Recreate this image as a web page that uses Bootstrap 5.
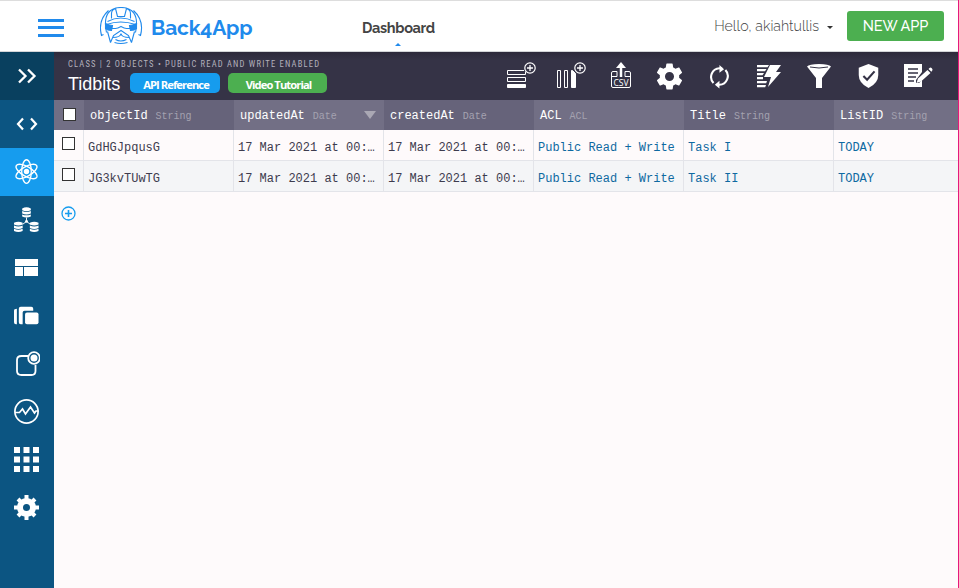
<!DOCTYPE html>
<html lang="en">
<head>
<meta charset="utf-8">
<meta name="viewport" content="width=device-width, initial-scale=1">
<title>Back4App Dashboard</title>
<link href="https://cdn.jsdelivr.net/npm/bootstrap@5.3.0/dist/css/bootstrap.min.css" rel="stylesheet">
<style>
body{height:588px;overflow:hidden;background:#fefafb;font-family:"Liberation Sans",sans-serif}
.app-shell{height:588px;border-right:1px solid #e6197b}
.topbar{height:52px;background:#fff;border-top:1px solid #ddd;border-bottom:1px solid #d3d5d8;font-family:Lato,sans-serif}
.burger{width:26px;height:18px;margin-left:38px;margin-top:3px}
.burger span{height:3px;background:#208aec}
.logo{margin-left:36px}
.brand{font:700 21px/30px Raleway,Lato,sans-serif;color:#208aec;margin-left:8px;width:103px;letter-spacing:-.15px;padding-top:3px}
.dash{margin-left:108px;width:74px;height:50px;padding-top:17px;font:700 14.5px/20px Raleway,Lato,sans-serif;color:#444;letter-spacing:-.32px}
.dash i{bottom:5px;left:33px;border:3px solid transparent;border-top:0;border-bottom-color:#208aec}
.hello{font:300 14.2px/20px Raleway,Lato,sans-serif;color:#444;white-space:nowrap}
.caret{border:3.5px solid transparent;border-top-color:#333;border-bottom:0;margin:2px 14px 0 8px}
.newapp{width:97px;height:30px;margin-right:14px;background:#4caf50;color:#fff;border-radius:3px;font:500 14.5px/30px Raleway,Lato,sans-serif;padding:0;border:0}
.side{width:54px;background:#0c5582}
.side>div{height:48px;color:#fff;padding-right:1px;padding-bottom:1px}
.side .first{background:#09405f}
.side .active{background:#169cee}
.toolbar{height:48px;background:linear-gradient(#2d2a3b,#353346 8px);color:#fff}
.class-info{padding-left:14px}
.meta{font:8.5px/10px "Roboto Condensed",Roboto,sans-serif;color:#b3b1bc;white-space:nowrap;padding-top:7px;letter-spacing:1.2px}
.class-name{font:18px/22px "Liberation Sans",sans-serif;width:62px;letter-spacing:0}
.pill{height:20px;border-radius:5px;color:#fff;font:700 11.2px/23px "Open Sans",sans-serif;letter-spacing:-.92px;padding-left:2px;text-align:center}
.api{width:90px;background:#169cee}.video{width:99px;background:#4caf50;margin-left:8px}
.tools{width:447px;margin-right:15px}
.tools>div{flex:1 1 0;min-width:0}
.grid{font:12px/30px "Liberation Mono",monospace;color:#3e3c4e;width:934px}
.grid-row{height:31px;border-bottom:1px solid #e3e4e9}
.grid-row>div{width:150px;border-right:1px solid #e3e4e9;padding:4px 4px 0;line-height:28px;white-space:nowrap;overflow:hidden}
.grid-row>div.check,.grid-head>div.check{width:30px;padding:7px 0 0 8px}
.grid-head>div.check{padding:8px 0 0 9px}
.grid-row.even{background:#f4f5f7}
.grid-head{height:30px;color:#fff}
.grid-head>div{width:150px;padding:3px 6px 0;line-height:27px;background:#66637a}
.grid-head>div.alt{background:#726f85}
.grid-head small{font-size:10px;color:#a4a2b0;margin-left:8px}
.box{width:13px;height:13px;background:#fff;border:1px solid #333}
.grid-row .link{color:#0e69a1}
.sort{border:6px solid transparent;border-top:8px solid #aaa8b4;border-bottom:0;margin:8px 2px 0 0}
.add{margin:14px 0 0 7px}
</style>
<script src="https://cdn.jsdelivr.net/npm/bootstrap@5.3.0/dist/js/bootstrap.bundle.min.js"></script>
</head>
<body>
<div class="app-shell d-flex flex-column overflow-hidden">
<header class="topbar d-flex align-items-center flex-shrink-0">
  <div class="burger d-flex flex-column justify-content-between"><span></span><span></span><span></span></div>
  <svg class="logo flex-shrink-0" width="43" height="38" viewBox="0.5 0.5 43 38" fill="none" stroke="#208aec" stroke-width="1.1">
    <path d="M7 26C3 7 11 1 21.500 1S40 7 36 26M12 12V7Q12 3 17 2M31 12V7q0-4-5-5M16 2l2 8h7l2-8M8 15q13-7 27 0M9 4Q-2 14 2 29l2-1M34 4q11 10 7 25l-2-1"/>
    <path d="M7 18q14-5 29 0M8 18q-1 4 3 4h5q2 0 5.500-2 3.500 2 5.500 2h5q4 0 3-4"/>
    <path d="M6 17q4 2 7 2l-1 5q-4 0-6-2zM37 17q-4 2-7 2l1 5q4 0 6-2z" fill="#208aec"/>
    <path d="M8 25l3 11M35 25l-3 11M11 36l3-7 7.500-5 7.500 5 3 7M13 31q8 0 8.500-4 .5 4 8.500 4M16 33q5 3 11 0M15 36q6 2 13 0"/>
  </svg>
  <div class="brand">Back4App</div>
  <div class="dash position-relative">Dashboard<i class="position-absolute"></i></div>
  <div class="hello ms-auto">Hello, akiahtullis</div><span class="caret"></span>
  <button class="newapp">NEW APP</button>
</header>
<div class="d-flex flex-grow-1">
  <nav class="side flex-shrink-0">
    <div class="first d-flex align-items-center justify-content-center"><svg width="20" height="16" fill="none" stroke="#fff" stroke-width="2.3"><path d="M2 1.500l6.500 6.500L2 14.500M11 1.500l6.500 6.500-6.500 6.500"/></svg></div>
    <div class="d-flex align-items-center justify-content-center"><svg width="22" height="14" fill="none" stroke="#fff" stroke-width="2.2"><path d="M7 1.500L2 7l5 5.500M15 1.500L20 7l-5 5.500"/></svg></div>
    <div class="active d-flex align-items-center justify-content-center"><svg width="25" height="25" viewBox="-12.5 -12.5 25 25" fill="none" stroke="#fff" stroke-width="1.35"><ellipse rx="4.800" ry="11.800"/><ellipse rx="4.800" ry="11.800" transform="rotate(60)"/><ellipse rx="4.800" ry="11.800" transform="rotate(120)"/><circle r="2.700" fill="#fff" stroke="none"/></svg></div>
    <div class="d-flex align-items-center justify-content-center"><svg width="25" height="25" viewBox="0 0 26 26"><defs><g id="db" fill="#fff"><path d="M0 1.500Q4.500-.8 9 1.500V3.300Q4.500 5.300 0 3.300zM0 4.200q4.500 2 9 0v2.600q-4.500 2-9 0zM0 7.700q4.500 2 9 0V10q-4.500 2-9 0z"/></g></defs><use href="#db" x="8.500"/><use href="#db" y="15"/><use href="#db" x="16.500" y="15"/><path d="M13 11v4l-4 3M13 15l4 3" stroke="#fff" fill="none"/><circle cx="13" cy="15" r="1.500" fill="#fff"/></svg></div>
    <div class="d-flex align-items-center justify-content-center"><svg width="23" height="17" fill="#fff"><path d="M0 0h23v7H0zM0 8h8v9H0zM9 8h14v9H9z"/></svg></div>
    <div class="d-flex align-items-center justify-content-center"><svg width="25" height="19" viewBox="0 0.5 26 19" fill="#fff"><path d="M3 3v16H2q-2 0-2-2V5q0-2 3-2zM5 3q0-2 2-2h11q2 0 2 2v2H11Q9 5 9 7v12H7q-2 0-2-2z"/><rect x="11.500" y="7" width="14" height="12" rx="2"/></svg></div>
    <div class="d-flex align-items-center justify-content-center"><svg width="27" height="25" viewBox="-0.5 0 27 25" fill="none" stroke="#fff" stroke-width="1.800"><path d="M15 5H8Q3.500 5 3.500 9v11q0 4 4.500 4h10q4 0 4-4V14"/><circle cx="20.500" cy="7" r="5.800"/><circle cx="20.500" cy="7" r="3.500" fill="#fff" stroke="none"/></svg></div>
    <div class="d-flex align-items-center justify-content-center"><svg width="25" height="25" viewBox="0.5 0.5 25 25" fill="none" stroke="#fff" stroke-width="1.700"><circle cx="13" cy="13" r="11.600"/><path d="M1.500 14H6l3-3.500 3 5L17 8.500l4 6 1.500-2H25"/></svg></div>
    <div class="d-flex align-items-center justify-content-center"><svg width="25" height="25" fill="#fff"><path d="M0 0h6v6H0zM9.500 0h6v6h-6zM19 0h6v6h-6zM0 9.500h6v6H0zM9.500 9.500h6v6h-6zM19 9.500h6v6h-6zM0 19h6v6H0zM9.500 19h6v6h-6zM19 19h6v6h-6z"/></svg></div>
    <div class="d-flex align-items-center justify-content-center"><svg width="25" height="25" viewBox="-12.5 -12.5 25 25" fill="none" stroke="#fff"><circle r="6.500" stroke-width="6"/><path stroke-width="4" d="M0-12.500V-8M0 8v4.500M-12.500 0H-8M8 0h4.500M-8.500-8.500l3 3M5.500 5.500l3 3M8.500-8.500l-3 3M-8.500 8.500l3-3"/></svg></div>
  </nav>
  <main class="flex-grow-1 overflow-hidden">
    <section class="toolbar d-flex justify-content-between">
      <div class="class-info">
        <div class="meta">CLASS | 2 OBJECTS • PUBLIC READ AND WRITE ENABLED</div>
        <div class="d-flex mt-1"><div class="class-name">Tidbits</div><div class="pill api">API Reference</div><div class="pill video">Video Tutorial</div></div>
      </div>
      <div class="tools d-flex flex-shrink-0 align-items-center">
        <div class="d-flex justify-content-center"><svg width="30" height="28" fill="none" stroke="#fff"><path d="M18 8.500H1.500v4h18v-3M1.500 15.500h18v4h-18z"/><path fill="#fff" d="M1.500 22.500h18v3h-18z"/><circle cx="24" cy="6" r="5.200" stroke-width="1.200"/><path d="M21 6h6M24 3v6" stroke-width="1.300"/></svg></div>
        <div class="d-flex justify-content-center"><svg width="30" height="28" fill="none" stroke="#fff"><path d="M1.500 8.500h3v17h-3zM8.500 8.500h3v17h-3z"/><path fill="#fff" d="M15.500 8.500h1l3 3v14h-4z"/><circle cx="24" cy="6" r="5.200" stroke-width="1.200"/><path d="M21 6h6M24 3v6" stroke-width="1.300"/></svg></div>
        <div class="d-flex justify-content-center"><svg width="22" height="28" viewBox="-1 1 22 28" fill="none" stroke="#fff"><path d="M7 10.500H3Q1.500 10.500 1.500 12v13q0 1.500 1.500 1.500h16q1.500 0 1.500-1.500V12q0-1.500-1.500-1.500h-4M1.500 15.500H7v-5M15 10.500v5h5.500"/><path d="M11 16V5" stroke-width="2.500"/><path d="M11 1L6 7h10z" fill="#fff" stroke="none"/><text x="11" y="24.500" text-anchor="middle" font-family="Open Sans,sans-serif" font-size="8.500" fill="#fff" stroke="none">CSV</text></svg></div>
        <div class="d-flex justify-content-center"><svg width="31" height="31" viewBox="0 0 24 24" fill="#fff"><path d="M19.430 12.980c.04-.32.070-.64.070-.98s-.03-.66-.07-.98l2.110-1.650c.19-.15.240-.42.120-.64l-2-3.460c-.12-.22-.39-.3-.61-.22l-2.490 1c-.52-.4-1.080-.73-1.690-.98l-.38-2.650C14.460 2.180 14.250 2 14 2h-4c-.25 0-.46.180-.49.420l-.38 2.650c-.61.250-1.170.590-1.690.980l-2.490-1c-.23-.09-.49 0-.61.220l-2 3.460c-.13.220-.07.490.120.640l2.110 1.650c-.04.320-.07.650-.07.980s.03.660.070.980l-2.110 1.650c-.19.150-.24.420-.12.640l2 3.460c.12.220.390.300.610.220l2.490-1c.52.400 1.080.730 1.690.980l.38 2.650c.03.240.240.420.490.420h4c.25 0 .46-.18.490-.42l.38-2.650c.61-.25 1.170-.59 1.690-.98l2.490 1c.23.090.490 0 .61-.22l2-3.460c.12-.22.070-.49-.12-.64zM12 15.500a3.500 3.500 0 110-7 3.500 3.500 0 010 7z"/></svg></div>
        <div class="d-flex justify-content-center"><svg width="22" height="25" viewBox="0.6 0 24 26" fill="none" stroke="#fff" stroke-width="2.300"><path d="M5.500 20A9.500 9.500 0 0112 4h3M18.500 6A9.500 9.500 0 0112 22H9"/><path d="M12 .5L17 5l-5 4zM12 17.500L7 22l5 4z" fill="#fff" stroke="none"/></svg></div>
        <div class="d-flex justify-content-center"><svg width="26" height="24" fill="#fff"><path d="M1 1h12l-1.500 2.200H1zM1 5h9.500L9 7.200H1zM1 9h7l-1.500 2.200H1zM1 13h6v2.200H1zM1 17h10l-.8 2.200H1zM1 21h9l-.8 2.200H1z"/><path d="M14 1h11l-5 7h5L12 23l3-10H8z"/></svg></div>
        <div class="d-flex justify-content-center"><svg width="26" height="26" fill="#fff"><path d="M1 3.500Q3 1 13 1t12 2.500L16 15v10h-6V15z"/><path d="M4 4q9 2 18 0" fill="none" stroke="#353346"/></svg></div>
        <div class="d-flex justify-content-center"><svg width="23" height="26" viewBox="0 0 24 28" fill="#fff"><path d="M12 1l10.500 4v8q0 9-10.500 14Q1.500 22 1.500 13V5z"/><path d="M6.500 14l4 4 8-9" fill="none" stroke="#353346" stroke-width="2.300"/></svg></div>
        <div class="d-flex justify-content-center"><svg width="30" height="26" fill="#fff"><path d="M1 1h18v8l-6 8v3h3l3-3v7H1z"/><path d="M5 6h10M5 10h10M5 14h8M5 18h6" stroke="#353346" stroke-width="1.500"/><path d="M13.500 20l1.500-4.500L24.500 7l3 3-9.500 8.500zM25.500 6l1-1q1-1 2.300.2t.2 2.800l-.7.700z"/></svg></div>
      </div>
    </section>
    <div class="grid">
      <div class="grid-head d-flex"><div class="check alt"><div class="box"></div></div><div>objectId<small>String</small></div><div class="alt d-flex">updatedAt<small>Date</small><span class="sort ms-auto"></span></div><div>createdAt<small>Date</small></div><div class="alt">ACL<small>ACL</small></div><div>Title<small>String</small></div><div class="alt">ListID<small>String</small></div></div>
      <div class="grid-row d-flex"><div class="check"><div class="box"></div></div><div>GdHGJpqusG</div><div>17 Mar 2021 at 00:…</div><div>17 Mar 2021 at 00:…</div><div class="link">Public Read + Write</div><div class="link">Task I</div><div class="link">TODAY</div></div>
      <div class="grid-row even d-flex"><div class="check"><div class="box"></div></div><div>JG3kvTUwTG</div><div>17 Mar 2021 at 00:…</div><div>17 Mar 2021 at 00:…</div><div class="link">Public Read + Write</div><div class="link">Task II</div><div class="link">TODAY</div></div>
    </div>
    <svg class="add d-block" width="15" height="15" fill="none" stroke="#169cee" stroke-width="1.300"><circle cx="7.500" cy="7.500" r="6.500"/><path d="M4 7.500h7M7.500 4v7" stroke-width="1.600"/></svg>
  </main>
</div>
</div>
</body>
</html>
